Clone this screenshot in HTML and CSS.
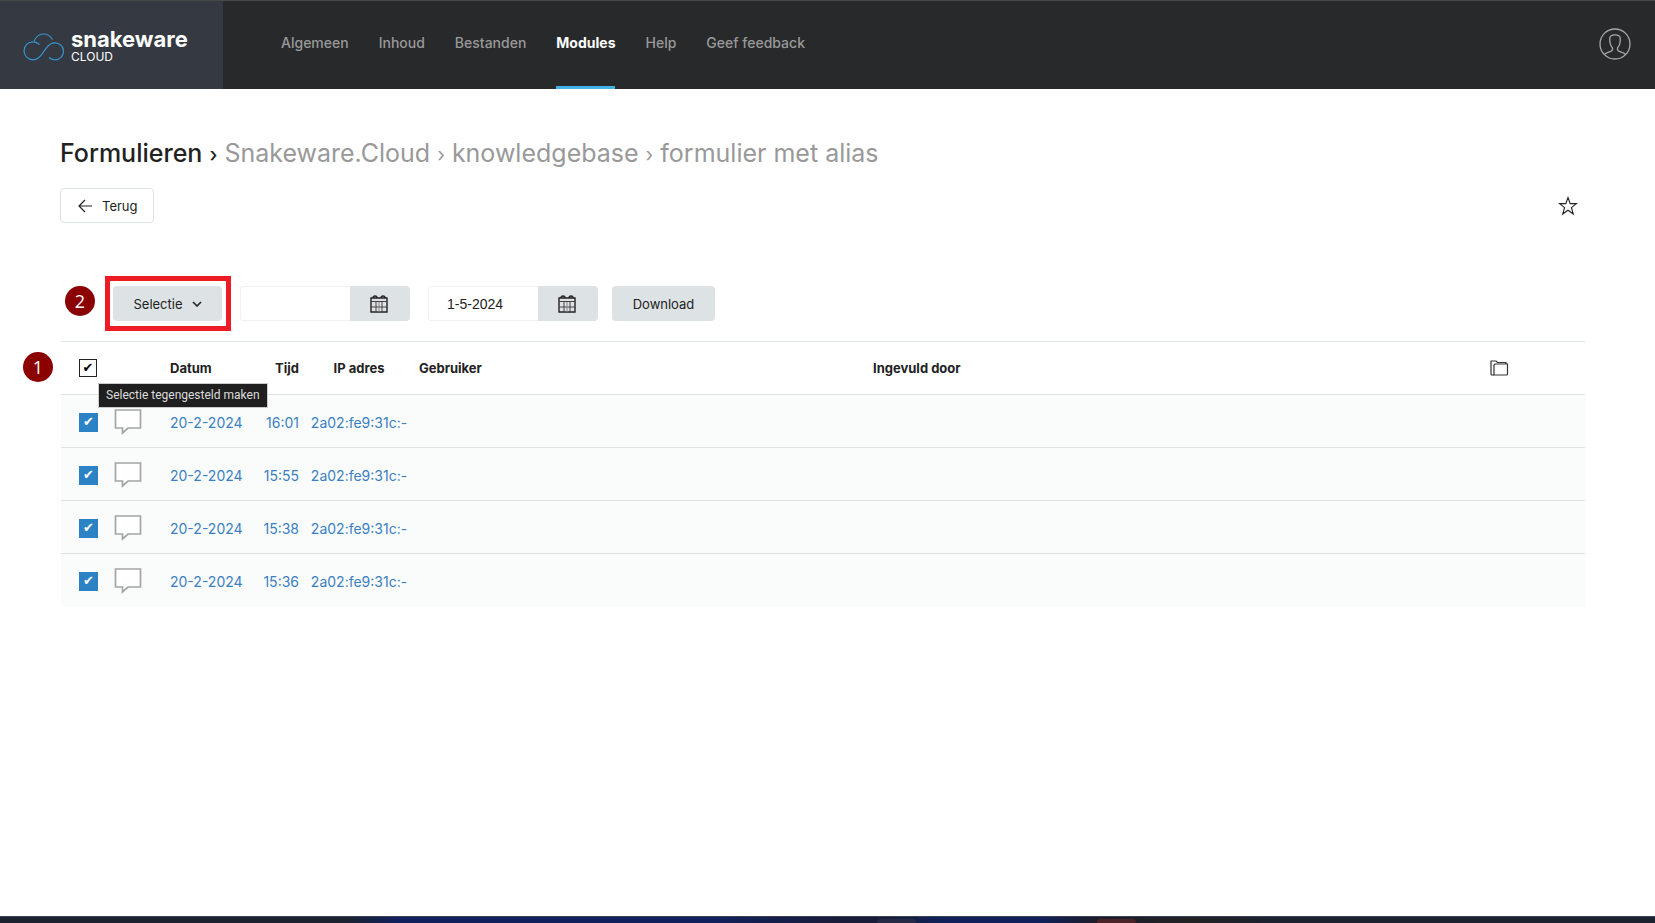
FILE: index.html
```html
<!DOCTYPE html>
<html lang="nl">

<head>
    <meta charset="UTF-8">
    <meta name="viewport" content="width=device-width, initial-scale=1.0">
    <title>Formulieren</title>
    <link rel="stylesheet" href="styles.css">
</head>

<body>

    <!-- Icons -->
    <svg class="sprite" aria-hidden="true">
        <symbol id="calendar" viewBox="0 0 18 18">
            <path d="M1 3h16v14H1z" fill="none" stroke="#222" stroke-width="1.4" />
            <path d="M1 6.500h16" stroke="#444" />
            <path d="M6 7v10M12 7v10M1 12h16" stroke="#444" stroke-width="1" />
            <path d="M9 7v10" stroke="#888" stroke-width="1" />
            <path d="M3 3a1.500 1.500 0 0 1 4 0M11 3a1.500 1.500 0 0 1 4 0" fill="none" stroke="#222" stroke-width="1.400" />
        </symbol>
        <symbol id="comment" viewBox="0 0 27 26">
            <path d="M1 1h25v18H13.500L8 24v-5H1z" fill="#fff" stroke="#a2a5a5" stroke-width="1.700" />
        </symbol>
    </svg>

    <header class="header">
        <a class="logo" href="#">
            <svg width="42" height="28" viewBox="0 0 42 28" fill="none" stroke="#3592cc" stroke-width="1.200">
                <path d="M16.500 11.500C14.500 9.500 12.500 8.800 10 8.800a9 9 0 0 0 0 18c4.500 0 7-3 9.500-6.500l3.500-5c2.500-3.500 5-5.500 9-5.500a8.500 8.500 0 0 1 0 17c-2.500 0-4.500-.8-6-2.300" />
                <path d="M11 8.500C13 3.500 16 1 20.500 1c4 0 7 2 9 5.500" />
            </svg>
            <span class="logo-text">
                <span class="logo-name">snakeware</span>
                <span class="logo-sub">CLOUD</span>
            </span>
        </a>
        <nav class="nav">
            <a href="#">Algemeen</a>
            <a href="#">Inhoud</a>
            <a href="#">Bestanden</a>
            <a class="active" href="#">Modules</a>
            <a href="#">Help</a>
            <a href="#">Geef feedback</a>
        </nav>
        <button class="account" type="button" aria-label="Account">
            <svg width="32" height="32" viewBox="0 0 32 32" fill="none" stroke="#a9a9a9" stroke-width="1.300">
                <circle cx="16" cy="16" r="15" />
                <path d="M5.500 26.500C7.500 24 13.500 24 13.500 21.500V20C11.500 18 11 16 10.800 13.500V10C11 7.500 13 6.800 16 6.800S21 7.500 21.200 10v3.500C21 16 20.500 18 18.500 20v1.500c0 2.500 6 2.500 8 5" />
            </svg>
        </button>
    </header>

    <main class="content">
        <h1 class="breadcrumb"><a class="current" href="#">Formulieren</a> <span class="current sep">›</span> <a href="#">Snakeware.Cloud</a> <span class="sep">›</span> <a href="#">knowledgebase</a> <span class="sep">›</span> <a href="#">formulier met alias</a></h1>

        <div class="actions">
            <button class="back" type="button">
                <svg width="14" height="14" viewBox="0 0 14 14" fill="none" stroke="#222" stroke-width="1.200">
                    <path d="M14 7H1M7 1L1 7l6 6" />
                </svg>
                Terug
            </button>
            <button class="favorite" type="button" aria-label="Favoriet">
                <svg width="20" height="20" viewBox="0 0 20 20" fill="none" stroke="#222" stroke-width="1.100">
                    <path d="M10 1.500l2.200 6.100h6.300l-5.100 4 1.900 6.400-5.300-3.800L4.700 18l1.900-6.400-5.100-4h6.300z" />
                </svg>
            </button>
        </div>

        <form class="toolbar">
            <div class="selection">
                <span class="step step-two">2</span>
                <button class="btn btn-select" type="button">
                    Selectie
                    <svg width="10" height="6" viewBox="0 0 10 6" fill="none" stroke="#222" stroke-width="1.600">
                        <path d="M1 1l4 4 4-4" />
                    </svg>
                </button>
            </div>
            <div class="date-group">
                <input type="text" aria-label="Datum vanaf">
                <button type="button" aria-label="Kies datum vanaf"><svg width="18" height="18"><use href="#calendar" /></svg></button>
            </div>
            <div class="date-group">
                <input type="text" value="1-5-2024" aria-label="Datum tot">
                <button type="button" aria-label="Kies datum tot"><svg width="18" height="18"><use href="#calendar" /></svg></button>
            </div>
            <button class="btn btn-download" type="button">Download</button>
        </form>

        <table class="entries">
            <thead>
                <tr>
                    <th class="col-check">
                        <span class="step step-one">1</span>
                        <input class="check-all" type="checkbox" checked aria-label="Selectie tegengesteld maken">
                        <span class="tooltip">Selectie tegengesteld maken</span>
                    </th>
                    <th class="col-comment"></th>
                    <th class="col-date">Datum</th>
                    <th class="col-time">Tijd</th>
                    <th class="col-ip">IP adres</th>
                    <th class="col-user">Gebruiker</th>
                    <th>Ingevuld door</th>
                    <th class="col-folder">
                        <svg width="19" height="16" viewBox="0 0 19 16" fill="none" stroke="#333" stroke-width="1.200">
                            <path d="M4 15H2a1 1 0 0 1-1-1V1h5l1.500 1.500H16V4" />
                            <path d="M5 4h12.500v10a1 1 0 0 1-1 1H4V5z" />
                        </svg>
                    </th>
                </tr>
            </thead>
            <tbody>
                <tr>
                    <td class="col-check"><input type="checkbox" checked aria-label="Selecteer 16:01"></td>
                    <td><svg width="28" height="26"><use href="#comment" /></svg></td>
                    <td class="col-date"><a href="#">20-2-2024</a></td>
                    <td class="col-time"><a href="#">16:01</a></td>
                    <td class="col-ip"><a href="#">2a02:fe9:31c:-</a></td>
                    <td></td>
                    <td></td>
                    <td></td>
                </tr>
                <tr>
                    <td class="col-check"><input type="checkbox" checked aria-label="Selecteer 15:55"></td>
                    <td><svg width="28" height="26"><use href="#comment" /></svg></td>
                    <td class="col-date"><a href="#">20-2-2024</a></td>
                    <td class="col-time"><a href="#">15:55</a></td>
                    <td class="col-ip"><a href="#">2a02:fe9:31c:-</a></td>
                    <td></td>
                    <td></td>
                    <td></td>
                </tr>
                <tr>
                    <td class="col-check"><input type="checkbox" checked aria-label="Selecteer 15:38"></td>
                    <td><svg width="28" height="26"><use href="#comment" /></svg></td>
                    <td class="col-date"><a href="#">20-2-2024</a></td>
                    <td class="col-time"><a href="#">15:38</a></td>
                    <td class="col-ip"><a href="#">2a02:fe9:31c:-</a></td>
                    <td></td>
                    <td></td>
                    <td></td>
                </tr>
                <tr>
                    <td class="col-check"><input type="checkbox" checked aria-label="Selecteer 15:36"></td>
                    <td><svg width="28" height="26"><use href="#comment" /></svg></td>
                    <td class="col-date"><a href="#">20-2-2024</a></td>
                    <td class="col-time"><a href="#">15:36</a></td>
                    <td class="col-ip"><a href="#">2a02:fe9:31c:-</a></td>
                    <td></td>
                    <td></td>
                    <td></td>
                </tr>
            </tbody>
        </table>
    </main>

    <footer class="taskbar">
        <span class="task"></span>
        <span class="task task-red"></span>
    </footer>

</body>

</html>
```
FILE: styles.css
```css
/* Global Styles */
* {
    box-sizing: border-box;
}

body {
    margin: 0;
    min-height: 100vh;
    display: flex;
    flex-direction: column;
    background-color: #fff;
    color: #222;
    font-family: Inter, "Liberation Sans", sans-serif;
    font-size: 14px;
}

a {
    color: inherit;
    text-decoration: none;
}

button {
    font-family: inherit;
    font-size: 13px;
    color: #222;
    padding: 0;
    border: none;
    cursor: pointer;
}

svg {
    display: block;
}

.sprite {
    position: absolute;
    width: 0;
    height: 0;
}

/* Header */
.header {
    display: flex;
    height: 89px;
    background-color: #28292b;
    border-top: 1px solid #454748;
}

.logo {
    display: flex;
    align-items: center;
    gap: 6px;
    width: 223px;
    padding: 3px 0 0 23px;
    background-color: #353a42;
    color: #fff;
}

.logo-text {
    display: flex;
    flex-direction: column;
}

.logo-name {
    font-size: 22px;
    line-height: 20px;
    font-weight: 700;
}

.logo-sub {
    font-size: 12px;
    line-height: 16px;
}

.nav {
    display: flex;
    gap: 30px;
    padding-left: 58px;
}

.nav a {
    padding-top: 33px;
    line-height: 18px;
    font-weight: 500;
    color: #999;
}

.nav .active {
    color: #fff;
    font-weight: 700;
    border-bottom: 3px solid #43b2e6;
}

.account {
    margin-left: auto;
    margin-right: 24px;
    padding-bottom: 2px;
    background: none;
}

/* Page content */
.content {
    padding: 48px 70px 0 60px;
}

.breadcrumb {
    margin: 0;
    font-size: 25px;
    line-height: 33px;
    font-weight: 400;
    color: #999;
}

.breadcrumb .current {
    color: #222;
    font-weight: 500;
}

.breadcrumb .sep {
    font-size: 20px;
}

.actions {
    display: flex;
    justify-content: space-between;
    align-items: center;
    margin-top: 16px;
    padding-right: 7px;
}

.back {
    display: flex;
    align-items: center;
    gap: 10px;
    height: 35px;
    padding: 0 15px 0 17px;
    background-color: #fff;
    border: 1px solid #dde3e5;
    border-radius: 4px;
}

.favorite {
    background: none;
}

/* Toolbar */
.toolbar {
    display: flex;
    align-items: center;
    margin-top: 53px;
    padding-left: 45px;
}

.selection {
    position: relative;
    padding: 5px 4px 5px 3px;
    margin-right: 9px;
    border: 5px solid #ed1c24;
}

.btn {
    height: 35px;
    background-color: #dde2e5;
    border-radius: 4px;
}

.btn-select {
    display: flex;
    align-items: center;
    justify-content: center;
    gap: 9px;
    width: 109px;
}

.btn-download {
    width: 103px;
    margin-left: -4px;
}

.date-group {
    display: flex;
    width: 170px;
    height: 35px;
    margin-right: 18px;
}

.date-group input {
    flex: 1;
    min-width: 0;
    padding: 0 18px;
    border: 1px solid #eff2f3;
    border-right: none;
    border-radius: 4px 0 0 4px;
    font-family: "Liberation Sans", Arial, sans-serif;
    font-size: 14px;
    color: #222;
}

.date-group button {
    display: flex;
    align-items: center;
    justify-content: center;
    width: 60px;
    padding-right: 3px;
    background-color: #dde2e5;
    border-radius: 0 4px 4px 0;
}

/* Numbered steps beside the controls */
.step {
    position: absolute;
    width: 30px;
    height: 30px;
    border-radius: 50%;
    background-color: #8b0000;
    color: #fff;
    font: 18px/30px "Open Sans", sans-serif;
    text-align: center;
}

.step-one {
    left: -38px;
    top: 10px;
}

.step-two {
    left: -45px;
    top: 5px;
}

/* Table */
.entries {
    width: calc(100% - 1px);
    margin: 10px 0 0 1px;
    table-layout: fixed;
    border-collapse: collapse;
}

.entries tr {
    height: 53px;
    border-top: 1px solid #dde2e2;
}

.entries th,
.entries td {
    padding: 0;
    text-align: left;
}

.entries th {
    font-size: 13px;
    font-weight: 700;
}

.entries td {
    padding-top: 2px;
    background-color: #fafcfb;
    color: #3a7fc1;
}

.entries .col-check {
    position: relative;
    width: 53px;
    padding-left: 18px;
}

.col-comment {
    width: 56px;
}

.col-date {
    width: 84px;
}

.entries .col-time {
    width: 45px;
    text-align: right;
}

.entries .col-ip {
    width: 120px;
    text-align: center;
}

.col-user {
    width: 454px;
}

.col-folder {
    width: 95px;
}

.entries input {
    appearance: none;
    display: block;
    width: 19px;
    height: 19px;
    margin: 0;
    background: #2b83c6;
}

.entries input:checked::before {
    content: "✔";
    display: block;
    font: 13px/18px "DejaVu Sans", sans-serif;
    text-align: center;
    color: #fff;
}

.entries .check-all {
    width: 18px;
    height: 18px;
    background: #fff;
    border: 1px solid #222;
}

.entries .check-all:checked::before {
    line-height: 16px;
    color: #000;
}

.tooltip {
    position: absolute;
    left: 37px;
    top: 41px;
    z-index: 2;
    padding: 0 7px;
    background-color: #1f1f1f;
    border: 1px solid #ccc;
    color: #ddd;
    font: 12px/23px Roboto, sans-serif;
    white-space: nowrap;
}

/* Taskbar */
.taskbar {
    display: flex;
    align-items: flex-end;
    gap: 181px;
    height: 7px;
    margin-top: auto;
    padding-left: 53%;
    border-top: 1px solid #3b4152;
    background: linear-gradient(90deg, #1b2230 0%, #1b2230 21%, #10205c 24%, #10205c 43%, #191c38 51%, #191c38 53%, #0f2158 57%, #0f2158 63%, #1c1c2c 66%, #222224 72%, #1b2230 77%);
}

.task {
    width: 39px;
    height: 4px;
    border-radius: 4px 4px 0 0;
    background-color: #252b45;
}

.task-red {
    background-color: #4b2428;
}
```
